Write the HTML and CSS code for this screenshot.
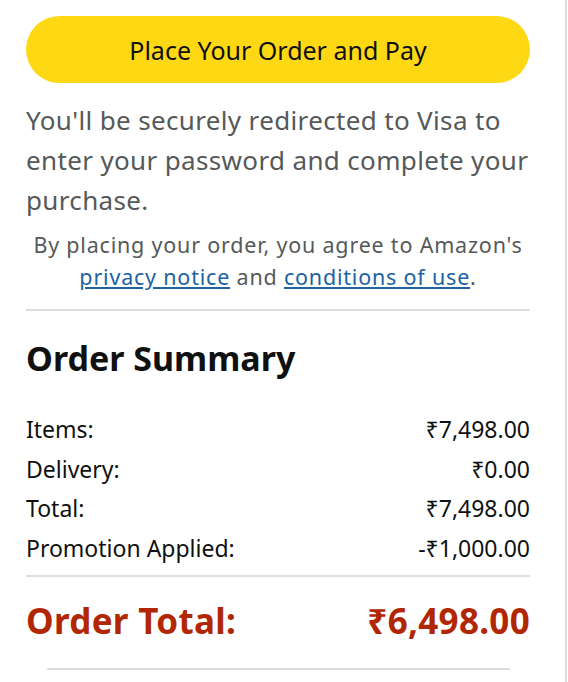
FILE: index.html
```html
<!DOCTYPE html>
<html lang="en">
<head>
<meta charset="utf-8">
<title>Place Your Order</title>
<link rel="stylesheet" href="styles.css">
</head>
<body>
<div class="page">
  <div class="content">
    <button class="place-btn" type="button">Place Your Order and Pay</button>
    <p class="redirect">You'll be securely redirected to Visa to enter your password and complete your purchase.</p>
    <p class="agree">By placing your order, you agree to Amazon's <a href="#">privacy notice</a> and <a href="#">conditions of use</a>.</p>
    <hr class="divider">
    <h2 class="summary-title">Order Summary</h2>
    <div class="rows">
      <div class="row"><span>Items:</span><span>₹7,498.00</span></div>
      <div class="row"><span>Delivery:</span><span>₹0.00</span></div>
      <div class="row"><span>Total:</span><span>₹7,498.00</span></div>
      <div class="row"><span>Promotion Applied:</span><span>-₹1,000.00</span></div>
    </div>
    <hr class="divider divider-tight">
    <div class="row total"><span>Order Total:</span><span>₹6,498.00</span></div>
    <hr class="divider divider-bottom">
  </div>
</div>
</body>
</html>
```
FILE: styles.css
```css
html, body {
  margin: 0;
  padding: 0;
  background: #fff;
}
body {
  font-family: "Noto Sans", "DejaVu Sans", sans-serif;
  color: #0f1111;
}
.page {
  width: 565px;
  min-height: 682px;
  border-right: 2px solid #dcdcdc;
}
.content {
  padding: 16px 35px 0 26px;
}
.place-btn {
  display: block;
  width: 100%;
  height: 67px;
  border: none;
  border-radius: 34px;
  background: #ffd814;
  color: #0f1111;
  font-family: inherit;
  font-size: 25px;
  letter-spacing: 0;
  padding: 0;
  margin: 0;
}
.redirect {
  margin: 17px 0 0;
  font-size: 26px;
  letter-spacing: 0.35px;
  line-height: 40px;
  color: #565959;
}
.agree {
  margin: 9px 0 0;
  font-size: 21.5px;
  letter-spacing: 0.8px;
  line-height: 32px;
  text-align: center;
  color: #565959;
}
.agree a {
  color: #2162a1;
  text-decoration: underline;
}
.divider {
  border: none;
  height: 2px;
  background: #dddddd;
  margin: 16px 0 0;
}
.summary-title {
  margin: 27px 0 0;
  font-size: 34px;
  line-height: 40px;
  font-weight: 700;
}
.rows {
  margin-top: 32px;
}
.row {
  display: flex;
  justify-content: space-between;
  font-size: 23px;
  line-height: 39.5px;
}
.divider-tight {
  margin-top: 7px;
}
.total {
  margin-top: 22px;
  font-size: 35px;
  letter-spacing: 0.3px;
  line-height: 44px;
  font-weight: 700;
  color: #b12704;
}
.divider-bottom {
  margin: 25px 20px 0 21px;
}
```
